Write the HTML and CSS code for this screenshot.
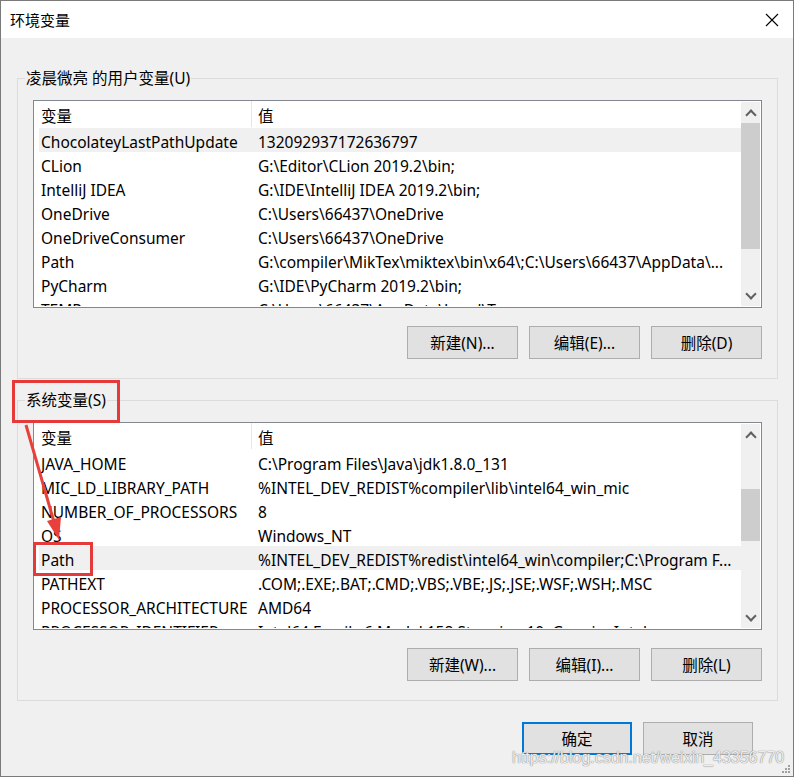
FILE: index.html
```html
<!DOCTYPE html>
<html lang="zh-CN">
<head>
    <meta charset="UTF-8">
    <title>环境变量</title>
    <link rel="stylesheet" href="styles.css">
</head>
<body>
<div class="window">
    <!-- 标题栏 -->
    <div class="titlebar">
        <span class="title">环境变量</span>
        <span class="close">
            <svg width="14" height="14" viewBox="0 0 14 14"><path d="M1 1L13 13M13 1L1 13" stroke="#000" stroke-width="1.1" fill="none"/></svg>
        </span>
    </div>

    <div class="content">
        <!-- 用户变量 -->
        <fieldset class="group">
            <legend>凌晨微亮 的用户变量(U)</legend>
            <div class="list">
                <div class="list-view">
                    <div class="row head"><span class="c1">变量</span><span class="c2">值</span></div>
                    <div class="row sel"><span class="c1">ChocolateyLastPathUpdate</span><span class="c2">132092937172636797</span></div>
                    <div class="row"><span class="c1">CLion</span><span class="c2">G:\Editor\CLion 2019.2\bin;</span></div>
                    <div class="row"><span class="c1">IntelliJ IDEA</span><span class="c2">G:\IDE\IntelliJ IDEA 2019.2\bin;</span></div>
                    <div class="row"><span class="c1">OneDrive</span><span class="c2">C:\Users\66437\OneDrive</span></div>
                    <div class="row"><span class="c1">OneDriveConsumer</span><span class="c2">C:\Users\66437\OneDrive</span></div>
                    <div class="row"><span class="c1">Path</span><span class="c2">G:\compiler\MikTex\miktex\bin\x64\;C:\Users\66437\AppData\...</span></div>
                    <div class="row"><span class="c1">PyCharm</span><span class="c2">G:\IDE\PyCharm 2019.2\bin;</span></div>
                    <div class="row"><span class="c1">TEMP</span><span class="c2">C:\Users\66437\AppData\Local\Temp</span></div>
                </div>
                <div class="scrollbar">
                    <div class="sb-btn up"></div>
                    <div class="track"><div class="thumb" style="margin-top:0;height:126px"></div></div>
                    <div class="sb-btn down"></div>
                </div>
            </div>
            <div class="buttons">
                <button class="btn">新建(N)...</button>
                <button class="btn">编辑(E)...</button>
                <button class="btn">删除(D)</button>
            </div>
        </fieldset>

        <!-- 系统变量 -->
        <fieldset class="group group-sys">
            <legend>系统变量(S)</legend>
            <div class="list">
                <div class="list-view">
                    <div class="row head"><span class="c1">变量</span><span class="c2">值</span></div>
                    <div class="row"><span class="c1">JAVA_HOME</span><span class="c2">C:\Program Files\Java\jdk1.8.0_131</span></div>
                    <div class="row"><span class="c1">MIC_LD_LIBRARY_PATH</span><span class="c2">%INTEL_DEV_REDIST%compiler\lib\intel64_win_mic</span></div>
                    <div class="row"><span class="c1">NUMBER_OF_PROCESSORS</span><span class="c2">8</span></div>
                    <div class="row"><span class="c1">OS</span><span class="c2">Windows_NT</span></div>
                    <div class="row sel"><span class="c1">Path</span><span class="c2">%INTEL_DEV_REDIST%redist\intel64_win\compiler;C:\Program F...</span></div>
                    <div class="row"><span class="c1">PATHEXT</span><span class="c2">.COM;.EXE;.BAT;.CMD;.VBS;.VBE;.JS;.JSE;.WSF;.WSH;.MSC</span></div>
                    <div class="row"><span class="c1">PROCESSOR_ARCHITECTURE</span><span class="c2">AMD64</span></div>
                    <div class="row"><span class="c1">PROCESSOR_IDENTIFIER</span><span class="c2">Intel64 Family 6 Model 158 Stepping 10, GenuineIntel</span></div>
                </div>
                <div class="scrollbar">
                    <div class="sb-btn up"></div>
                    <div class="track"><div class="thumb" style="margin-top:44px;height:52px"></div></div>
                    <div class="sb-btn down"></div>
                </div>
            </div>
            <div class="buttons">
                <button class="btn">新建(W)...</button>
                <button class="btn">编辑(I)...</button>
                <button class="btn">删除(L)</button>
            </div>
        </fieldset>

        <div class="dialog-buttons">
            <button class="btn btn-default">确定</button>
            <button class="btn">取消</button>
        </div>
    </div>

    <!-- 标注 -->
    <div class="mark mark-group"></div>
    <div class="mark mark-path"></div>
    <svg class="arrow" width="80" height="130" viewBox="0 0 80 130">
        <line x1="26" y1="5" x2="54" y2="102" stroke="#e8403a" stroke-width="3"/>
        <polygon points="47,101 61,97 59,120" fill="#e8403a"/>
    </svg>

    <div class="watermark">https://blog.csdn.net/weixin_43356770</div>
    <svg class="grip" width="10" height="10" viewBox="0 0 10 10">
        <rect x="7" y="1" width="2" height="2" fill="#a0a0a0"/>
        <rect x="4" y="4" width="2" height="2" fill="#a0a0a0"/>
        <rect x="7" y="4" width="2" height="2" fill="#a0a0a0"/>
        <rect x="1" y="7" width="2" height="2" fill="#a0a0a0"/>
        <rect x="4" y="7" width="2" height="2" fill="#a0a0a0"/>
        <rect x="7" y="7" width="2" height="2" fill="#a0a0a0"/>
    </svg>
</div>
</body>
</html>
```

FILE: styles.css
```css
/* 通用 */
* {
    box-sizing: border-box;
}

body {
    margin: 0;
    font-family: "Noto Sans", "Noto Sans CJK SC", sans-serif;
    font-size: 15.5px;
    color: #000;
    background-color: #f0f0f0;
}

.window {
    position: relative;
    width: 794px;
    height: 777px;
    border: 1px solid #7a7a7a;
    background-color: #f0f0f0;
    overflow: hidden;
}

/* 标题栏 */
.titlebar {
    height: 37px;
    background-color: #fff;
    display: flex;
    align-items: center;
    justify-content: space-between;
    padding: 0 14px 0 9px;
}

.title {
    font-family: "Noto Sans CJK SC", sans-serif;
    font-size: 15px;
    line-height: 20px;
}

.close {
    display: flex;
}

/* 内容 */
.content {
    padding: 0 15px 0 16px;
}

.group {
    margin: 30px 0 0;
    padding: 12px 15px 19px;
    border: 1px solid #dcdcdc;
    min-inline-size: 0;
}

.group-sys {
    margin-top: 11px;
}

.group legend {
    margin-left: -8px;
    padding: 0 1px;
    line-height: 20px;
}

.list {
    height: 208px;
    border: 1px solid #828790;
    background-color: #fff;
    display: flex;
    padding: 1px 1px 1px 0;
}

.list-view {
    flex: 1;
    overflow: hidden;
    margin-top: -1px;
}

.row {
    display: flex;
    height: 24px;
    line-height: 24px;
    padding-top: 2px;
    margin-left: 5px;
    white-space: nowrap;
}

.row.head {
    height: 27px;
    padding-top: 0;
}

.row.sel {
    background-color: #f0f0f0;
}

.c1 {
    width: 213px;
    flex: none;
    padding-left: 2px;
}

.c2 {
    padding-left: 6px;
}

.head .c1,
.head .c2 {
    padding-top: 3px;
}

.head .c1 {
    border-right: 1px solid #e5e5e5;
    height: 26px;
}

/* 滚动条 */
.scrollbar {
    width: 19px;
    display: flex;
    flex-direction: column;
    background-color: #f0f0f0;
}

.sb-btn {
    height: 21px;
    position: relative;
}

.sb-btn::after {
    content: "";
    position: absolute;
    left: 6px;
    width: 6px;
    height: 6px;
    border-left: 2px solid #606060;
    border-top: 2px solid #606060;
}

.sb-btn.up::after {
    top: 9px;
    transform: rotate(45deg);
}

.sb-btn.down::after {
    top: 5px;
    transform: rotate(225deg);
}

.track {
    flex: 1;
}

.thumb {
    background-color: #cdcdcd;
}

/* 按钮 */
.buttons {
    display: flex;
    justify-content: flex-end;
    gap: 11px;
    margin-top: 18px;
}

.btn {
    width: 111px;
    height: 33px;
    background-color: #e1e1e1;
    border: 1px solid #adadad;
    font-family: "Noto Sans", "Noto Sans CJK SC", sans-serif;
    font-size: 15.5px;
    color: #000;
    padding: 0;
}

.btn-default {
    border: 2px solid #0078d7;
}

.dialog-buttons {
    display: flex;
    justify-content: flex-end;
    gap: 11px;
    margin: 21px 25px 0 0;
}

.dialog-buttons .btn {
    width: 110px;
}

/* 标注 */
.mark {
    position: absolute;
    border: 3px solid #e53a3a;
}

.mark-group {
    left: 11px;
    top: 379px;
    width: 108px;
    height: 43px;
}

.mark-path {
    left: 32px;
    top: 541px;
    width: 60px;
    height: 34px;
}

.arrow {
    position: absolute;
    left: -1px;
    top: 419px;
}

.watermark {
    position: absolute;
    left: 511px;
    top: 748px;
    font-family: "Liberation Sans", sans-serif;
    font-size: 16px;
    color: rgba(255, 255, 255, 0.85);
    text-shadow: 0 0 1px #8a8a8a, 0 0 1px #8a8a8a;
    white-space: nowrap;
}

.grip {
    position: absolute;
    right: 2px;
    bottom: 2px;
}
```
